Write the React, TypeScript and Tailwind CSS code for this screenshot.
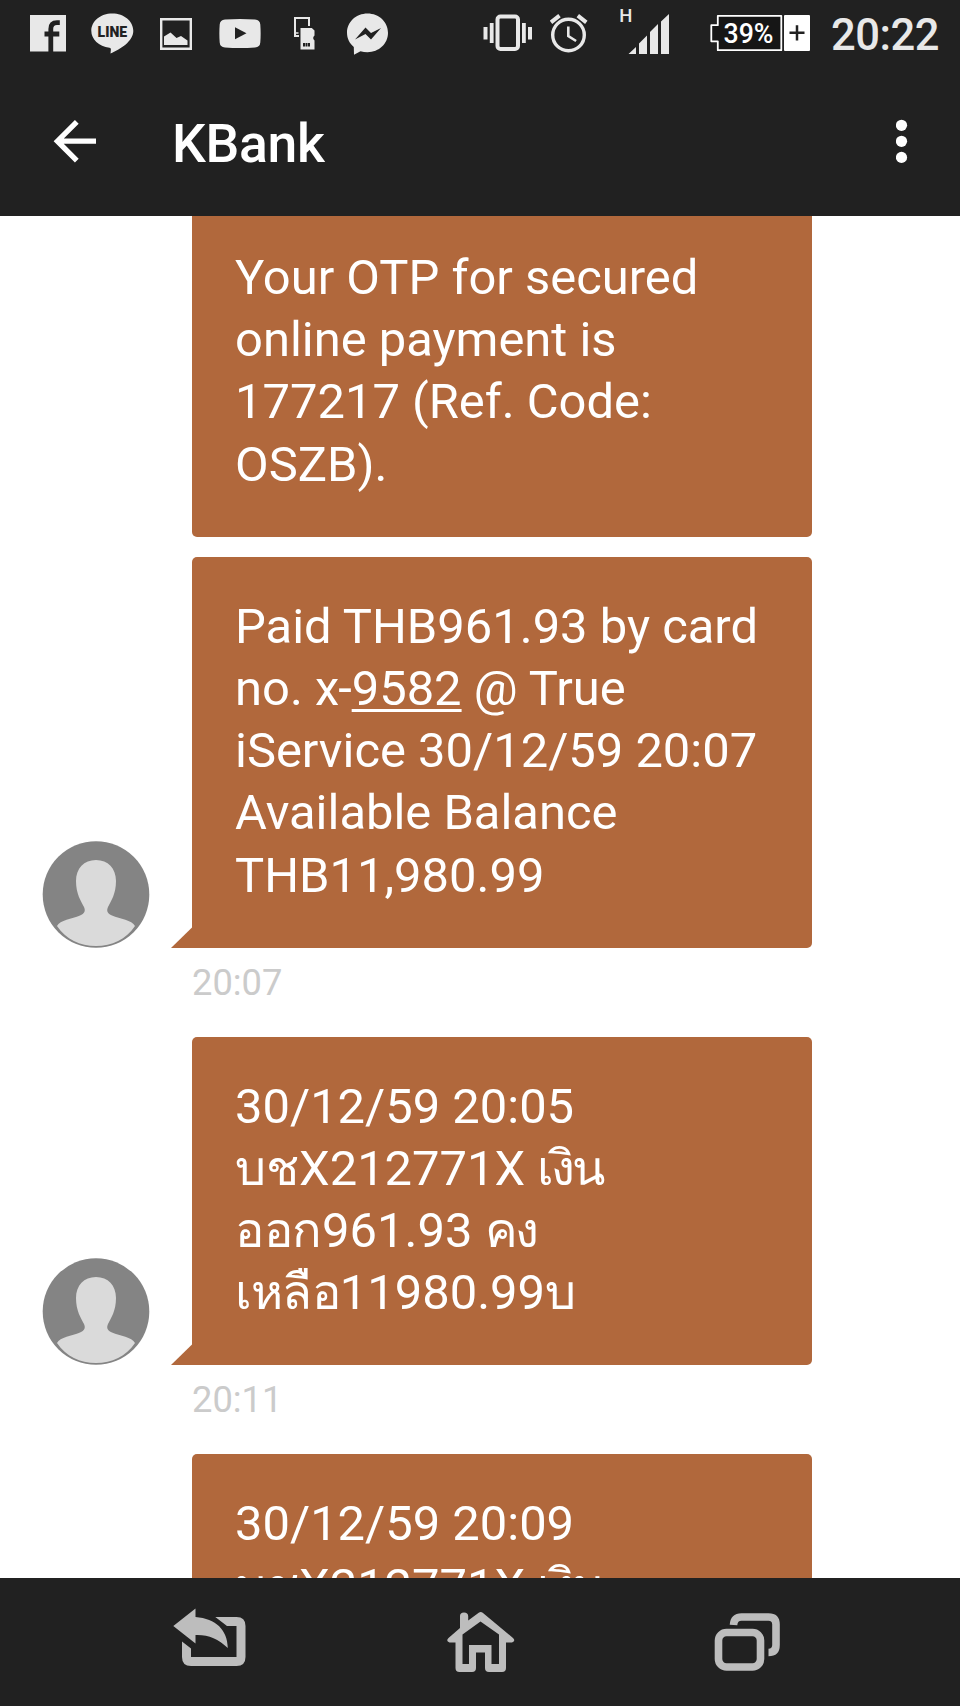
import type { ReactNode } from 'react';

type Message = {
  id: number;
  lines: ReactNode[];
  time?: string;
};

const messages: Message[] = [
  {
    id: 1,
    lines: ['Your OTP for secured', 'online payment is', '177217 (Ref. Code:', 'OSZB).'],
  },
  {
    id: 2,
    lines: [
      'Paid THB961.93 by card',
      <>
        no. x<span className="-ml-px">-</span>
        <span className="underline decoration-[3px] underline-offset-[4px] [text-decoration-skip-ink:none]">9582</span> @ True
      </>,
      'iService 30/12/59 20:07',
      'Available Balance',
      'THB11,980.99',
    ],
    time: '20:07',
  },
  {
    id: 3,
    lines: [
      '30/12/59 20:05',
      <>
        บชX212771X <span className="tracking-[-3px]">เงิน</span>
      </>,
      <>
        <span className="tracking-[-0.3px]">ออก</span>961.93 <span className="tracking-[-2.5px]">คง</span>
      </>,
      <>
        <span className="tracking-[-0.8px]">เหลือ</span>11980.99<span className="tracking-[-1px]">บ</span>
      </>,
    ],
    time: '20:11',
  },
  {
    id: 4,
    lines: [
      '30/12/59 20:09',
      <>
        บชX212771X <span className="tracking-[-3px]">เงิน</span>
      </>,
    ],
  },
];

function StatusBar() {
  return (
    <div className="flex h-[68px] shrink-0 items-start text-[#e8e8e8]">
      <svg className="ml-[30px] h-[68px] w-9" viewBox="0 0 36 68" fill="currentColor">
        <path d="M0 15h36.500v36.500H0z" />
        <path d="M20.800 52V29q0-6.300 6.200-6.300h2.800M14.500 34h14.800" fill="none" stroke="#212121" strokeWidth="4.800" />
      </svg>
      <svg className="ml-[25px] h-[68px] w-[43px]" viewBox="0 0 43 68" fill="currentColor">
        <path d="M21.300 13.500C9.500 13.500.3 21.200.3 30.800c0 8.600 7.500 15.600 18.200 17q1.500.3 1.400 1.800l-.4 4C29 49.500 42.300 41.500 42.300 30.800c0-9.600-9.300-17.300-21-17.300z" />
        <text x="6.600" y="36.700" fontSize="14" fontWeight="900" textLength="29.500" lengthAdjust="spacingAndGlyphs" fill="#212121">LINE</text>
      </svg>
      <svg className="ml-[26px] h-[68px] w-8" viewBox="0 0 32 68">
        <path d="M1.200 19.200h29.600v29.600H1.200z" fill="none" stroke="currentColor" strokeWidth="2.400" />
        <path d="M4 45v-8.500l6.500-4 6 5.500 4.500-2 6.500 4.500V45z" fill="currentColor" />
      </svg>
      <svg className="ml-[27px] h-[68px] w-[42px]" viewBox="0 0 42 68">
        <path d="M6 19.500q15-1.200 30 0 5 .4 5.300 5 .7 9 0 18-.3 4.600-5.300 5-15 1-30 0-5-.4-5.300-5-.7-9 0-18 .3-4.600 5.300-5z" fill="currentColor" />
        <path d="M16 27.300v12l11.500-6z" fill="#212121" />
      </svg>
      <svg className="ml-[33px] h-[68px] w-[22px]" viewBox="0 0 22 68">
        <path d="M5 36H1V18h14v8" fill="none" stroke="currentColor" strokeWidth="2" />
        <path d="M2 33h2.500" stroke="currentColor" strokeWidth="1.500" />
        <path
          d="M6.500 28h11.300l2.700 2.500v5L19.300 37v2l1.200 1.500v9h-14z"
          fill="currentColor"
          stroke="#212121"
          strokeWidth="2"
          paintOrder="stroke"
        />
        <path d="M9 43h2v3.500H9zM11.500 43h2v3.500h-2zM14 43h2v3.500h-2z" fill="#212121" />
      </svg>
      <svg className="ml-[31px] h-[68px] w-[42px]" viewBox="0 0 42 68">
        <path d="M20.500 13.500C9 13.500 0 22 0 32.800c0 5.700 2.600 10.700 6.800 14.200L7 54.800l6.500-3.600q3.300 1 7 1C32 52.200 41 43.700 41 32.800 41 22 32 13.500 20.500 13.500z" fill="currentColor" />
        <path d="M8 39.500l10.500-12 5.500 5.500 10-5-10 11.500-5.500-5.500z" fill="#212121" />
      </svg>
      <svg className="ml-[94px] h-[68px] w-[50px]" viewBox="0 0 50 68" fill="currentColor">
        <path d="M.5 27h4v12.500h-4zM6.800 23h3.800v20H6.800zM39 23h3.800v20H39zM45 27h4v12.500h-4z" />
        <rect x="14.500" y="16.500" width="20.500" height="32.500" rx="3" fill="none" stroke="currentColor" strokeWidth="4" />
      </svg>
      <svg className="ml-[17px] h-[68px] w-[38px]" viewBox="0 0 38 68" fill="none" stroke="currentColor">
        <circle cx="18.500" cy="35" r="15.800" strokeWidth="3.400" />
        <path d="M18.300 26.500v9.500l7.800 5" strokeWidth="2.600" />
        <path d="M1 22.300l8.500-6.600M27.800 15.700l8.500 6.600" strokeWidth="4" />
      </svg>
      <svg className="ml-8 h-[68px] w-[52px]" viewBox="0 0 52 68" fill="currentColor">
        <text x="-.8" y="22.300" fontSize="18.500" fontWeight="500">H</text>
        <path d="M8.500 54l7.500-7v7zM19 54V43.500l8-8V54zM30 54V32l8-8v30zM41 54V21.500l8-7.500v40z" />
      </svg>
      <svg className="ml-[38px] h-[68px] w-[100px]" viewBox="0 0 100 68">
        <path d="M7.800 15.800h63.500v34.400H7.800V41.300H1.300V25.200h6.500z" fill="#161616" stroke="#fff" strokeWidth="1.800" strokeLinejoin="round" />
        <text x="13.500" y="43" fontSize="28" fontWeight="500" textLength="50" lengthAdjust="spacingAndGlyphs" fill="#fff">39%</text>
        <rect x="74" y="15" width="26" height="36" rx="1" fill="#fff" />
        <path d="M79.500 32.800h15M87 25.200v15.200" stroke="#212121" strokeWidth="2.500" />
      </svg>
      <span className="ml-[21px] mt-[10px] text-[43.5px] leading-[52px] font-medium tracking-[-0.5px]">20:22</span>
    </div>
  );
}

function Toolbar() {
  return (
    <div className="flex h-[148px] shrink-0 items-start pt-[48px] text-white">
      <svg className="ml-[53px] h-[50px] w-11" viewBox="0 0 44 50" fill="none" stroke="currentColor" strokeWidth="5.300">
        <path d="M4 25.200h39M23.800 5.800L4.400 25.200l19.400 19.400" />
      </svg>
      <h1 className="mt-px ml-[75px] text-[53.5px] leading-[54px] font-medium tracking-[-0.3px]">KBank</h1>
      <svg className="mr-[52px] ml-auto h-[50px] w-3" viewBox="0 0 12 50" fill="currentColor">
        <circle cx="5.500" cy="9.300" r="5.600" />
        <circle cx="5.500" cy="25.300" r="5.600" />
        <circle cx="5.500" cy="41.400" r="5.600" />
      </svg>
    </div>
  );
}

function Avatar() {
  return (
    <svg className="ml-[42px] h-[107px] w-[108px] shrink-0" viewBox="0 0 108 107">
      <circle cx="54" cy="53.500" r="53.300" fill="#848484" />
      <path
        d="M54 19C42 19 34 27.500 34 40c0 13 5 20 8 26 1.800 4 .5 6.500-4 8.500-8 3.300-20 4.500-23 10.500 9 13.500 23 20 39 20s30-6.500 39-20c-3-6-15-7.200-23-10.500-4.500-2-5.800-4.500-4-8.500 3-6 8-13 8-26 0-12.500-8-21-20-21z"
        fill="#dadada"
      />
    </svg>
  );
}

function MessageRow({ message }: { message: Message }) {
  return (
    <div className={message.time ? 'mb-[34px]' : 'mb-5'}>
      <div className="flex items-end">
        {message.time ? <Avatar /> : <div className="w-[150px] shrink-0" />}
        <div className="flex w-[42px] shrink-0 justify-end">
          {message.time && (
            <svg className="h-[21px] w-[21px]" viewBox="0 0 21 21" fill="#b1683c">
              <path d="M0 21L21 .5V21z" />
            </svg>
          )}
        </div>
        <div
          className={`w-[620px] bg-[#b1683c] px-[43px] pt-[39px] pb-[41px] text-[48.9px] leading-[62.2px] whitespace-nowrap text-white ${
            message.time ? 'rounded-[5px] rounded-bl-none' : 'rounded-[5px]'
          }`}
        >
          {message.lines.map((line, i) => (
            <p key={i} className="h-[62.2px]">{line}</p>
          ))}
        </div>
      </div>
      {message.time && (
        <p className="ml-[192px] pt-[15px] text-[36.3px] leading-[40px] text-[#cbcbcb]">{message.time}</p>
      )}
    </div>
  );
}

function NavBar() {
  return (
    <nav className="flex h-32 shrink-0 items-start bg-[#212121] pt-[30px] text-[#bdbdbd]">
      <svg className="ml-[173px] h-[66px] w-[73px]" viewBox="0 0 73 66" fill="currentColor">
        <path d="M.3 18L22.500.5V9C43 10.500 54.500 22 54.800 40 45 30.500 35 26.500 22.500 27v8.500z" />
        <path d="M42.300 9h21.200q9 0 9 9v31q0 9-9 9H18q-9 0-9-9V33.500l9 7V49h45.500V18H54z" />
      </svg>
      <svg className="ml-[201px] h-[66px] w-[68px]" viewBox="0 0 68 66" fill="currentColor" fillRule="evenodd">
        <path d="M13 20V8q0-3.500 4-3.500T21.200 8v4.500l10.500-7.700q2-1.400 4 0L66 30q3 3-1 4.500h-6V60q0 4-4 4H42q-4 0-4-4V44.500h-9V60q0 4-4 4H12.500q-4 0-4-4V34.500h-6q-4-1.500-1-4.500zM15.500 26.500V56H22V37h22.500v19H52V26.500L33.500 13.500z" />
      </svg>
      <svg className="ml-[199px] h-[66px] w-[67px]" viewBox="0 0 67 66" fill="none" stroke="currentColor" strokeWidth="7.600">
        <rect x="4.500" y="24.500" width="42" height="34.500" rx="8" />
        <path d="M19.500 17q.5-8 8-8h27q7.500 0 7.500 7.500V37q0 7.500-7.500 7.500" />
      </svg>
    </nav>
  );
}

export default function App() {
  return (
    <div className="flex h-[1706px] w-[960px] flex-col overflow-hidden bg-white font-[Roboto,'Noto_Sans',sans-serif]">
      <header className="h-[216px] shrink-0 bg-[#212121]">
        <StatusBar />
        <Toolbar />
      </header>
      <main className="flex min-h-0 flex-1 flex-col overflow-hidden">
        <div className="-mt-[8px]">
          {messages.map((message) => (
            <MessageRow key={message.id} message={message} />
          ))}
        </div>
      </main>
      <NavBar />
    </div>
  );
}
